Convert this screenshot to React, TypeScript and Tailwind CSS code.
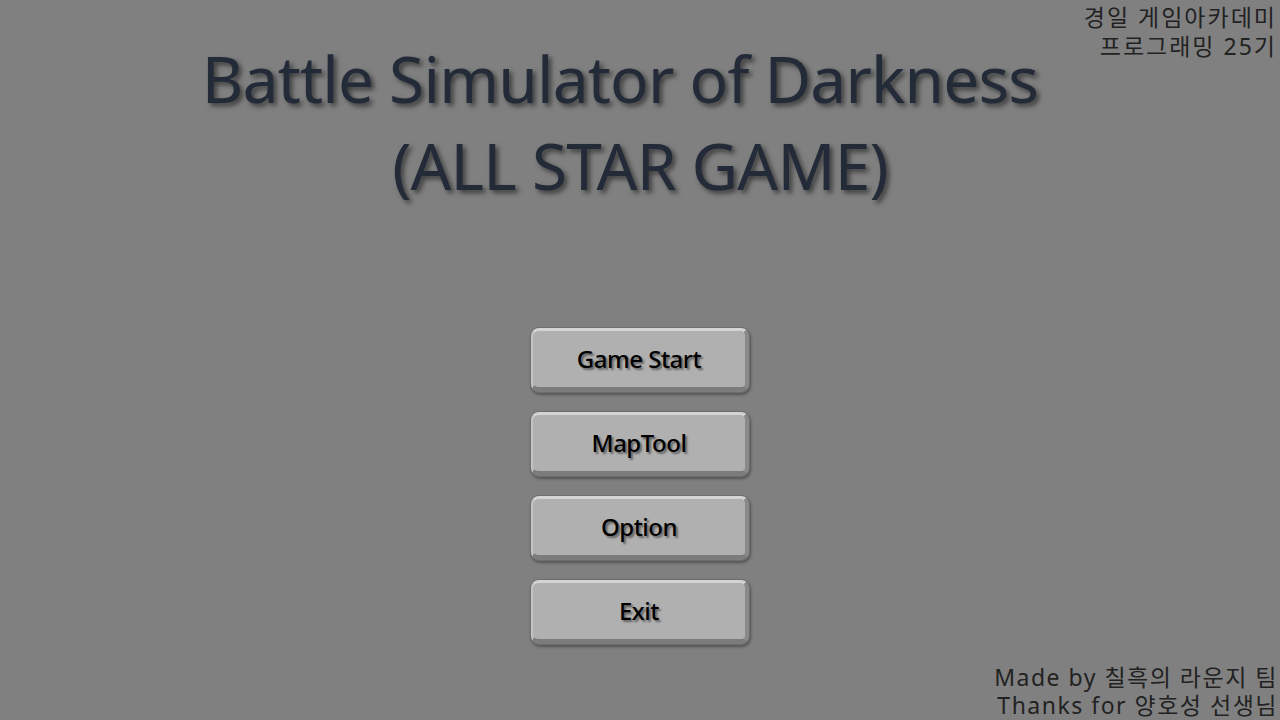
import React from "react";

const font = { fontFamily: '"Noto Sans", "Noto Sans CJK KR", sans-serif' };

function MenuButton({ label }: { label: string }) {
  return (
    <div className="w-[220px] h-[66px] rounded-[9px] bg-[#6e6e6e] p-[1px] shadow-[1px_2px_3px_rgba(0,0,0,0.35)]">
      <div className="w-full h-full rounded-[8px] bg-[#b0b0b0] border-t-[3px] border-l-[2px] border-r-[4px] border-b-[5px] border-t-[#d4d4d4] border-l-[#c4c4c4] border-r-[#8a8a8a] border-b-[#7c7c7c] flex items-center justify-center">
        <span className="text-[24px] font-medium text-black leading-none [text-shadow:2px_2px_2px_rgba(0,0,0,0.45)] tracking-[-0.5px]">
          {label}
        </span>
      </div>
    </div>
  );
}

export default function App() {
  return (
    <div className="relative w-full h-[720px] bg-[#808080] overflow-hidden" style={font}>
      <div className="absolute top-[3px] right-[3px] text-right text-[23px] leading-[29px] tracking-[2px] text-[#222222]">
        <div>경일 게임아카데미</div>
        <div>프로그래밍 25기</div>
      </div>
      <div className="flex flex-col items-center pt-[35px]">
        <div className="text-[#232b38] text-[64px] leading-[87px] text-center tracking-[-0.8px] [text-shadow:3px_3px_5px_rgba(0,0,0,0.55)]">
          <div className="pr-[40px]">Battle Simulator of Darkness</div>
          <div>(ALL STAR GAME)</div>
        </div>
        <div className="flex flex-col gap-[18px] mt-[118px]">
          <MenuButton label="Game Start" />
          <MenuButton label="MapTool" />
          <MenuButton label="Option" />
          <MenuButton label="Exit" />
        </div>
      </div>
      <div className="absolute bottom-[1px] right-[2px] text-right text-[23px] leading-[28px] tracking-[1.5px] text-[#222222]">
        <div>Made by 칠흑의 라운지 팀</div>
        <div>Thanks for 양호성 선생님</div>
      </div>
    </div>
  );
}
